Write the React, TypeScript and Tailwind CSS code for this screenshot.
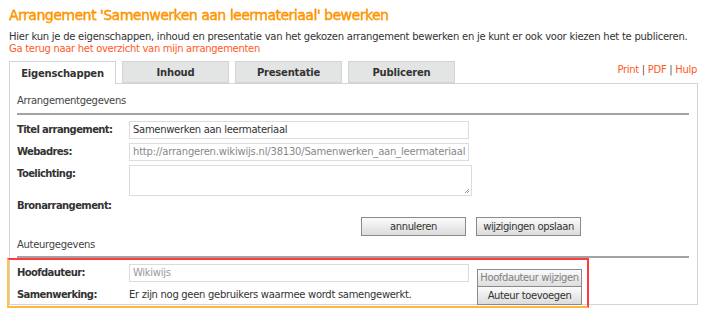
import React from 'react';

const font = { fontFamily: '"DejaVu Sans", Verdana, sans-serif' };

function Tab({ label, active }: { label: string; active?: boolean }) {
  return (
    <div
      className={
        active
          ? 'w-[107px] h-[23px] -mb-px flex items-center justify-center border border-b-0 border-[#d4d4d4] bg-white font-bold text-[10px] tracking-[-0.2px] text-[#333] z-10'
          : 'w-[107px] h-[22px] flex items-center justify-center border border-[#d4d4d4] bg-[#e3e5e5] font-bold text-[10px] tracking-[-0.2px] text-[#333]'
      }
    >
      {label}
    </div>
  );
}

function Btn({ label, disabled }: { label: string; disabled?: boolean }) {
  return (
    <button
      className={
        'w-[105px] h-[19px] border border-[#8a8a8a] bg-gradient-to-b from-[#fbfbfb] to-[#dcdcdc] text-[10px] leading-none whitespace-nowrap tracking-[-0.4px] ' +
        (disabled ? 'text-[#808080]' : 'text-[#333]')
      }
    >
      {label}
    </button>
  );
}

function Row({ label, children, h = 'h-[22px]' }: { label: string; children?: React.ReactNode; h?: string }) {
  return (
    <div className={'flex items-start ' + h}>
      <div className="w-[112px] pt-[3px] font-bold text-[10px] leading-[12px] tracking-[-0.6px] whitespace-nowrap text-[#333]">{label}</div>
      {children}
    </div>
  );
}

export default function App() {
  return (
    <div className="w-[704px] h-[314px] bg-white text-[#333] overflow-hidden" style={font}>
      <div className="pl-[9px] pr-[7px]">
        <h1 className="pt-[6px] h-[26px] text-[14px] font-normal leading-[18px] tracking-[-0.5px] bg-gradient-to-b from-[#ff7a00] to-[#ffad00] bg-clip-text text-transparent w-fit [-webkit-text-stroke:0.3px_#ff8c00]">
          Arrangement 'Samenwerken aan leermateriaal' bewerken
        </h1>
        <p className="text-[10px] leading-[12px] mt-[5px] whitespace-nowrap tracking-[-0.25px]">
          Hier kun je de eigenschappen, inhoud en presentatie van het gekozen arrangement bewerken en je kunt er ook voor kiezen het te publiceren.
        </p>
        <a className="block text-[10px] leading-[12px] tracking-[-0.3px] text-[#ff5a1e]">Ga terug naar het overzicht van mijn arrangementen</a>

        <div className="flex items-end mt-[6px]">
          <div className="flex items-end gap-[6px]">
            <Tab label="Eigenschappen" active />
            <Tab label="Inhoud" />
            <Tab label="Presentatie" />
            <Tab label="Publiceren" />
          </div>
          <div className="ml-auto mb-[6px] text-[10px] tracking-[-0.3px] text-[#ff5a1e]">
            Print <span className="text-[#555]">|</span> PDF <span className="text-[#555]">|</span> Hulp
          </div>
        </div>

        <div className="border border-[#d4d4d4] w-[689px] h-[222px] px-[7px]">
          <div className="pt-[9px] text-[10px] leading-[16px] tracking-[-0.3px] text-[#444]">Arrangementgegevens</div>
          <div className="mt-[4px] border-t-2 border-[#a3a3a3] mr-[1px]"></div>

          <div className="mt-[6px]">
            <Row label="Titel arrangement:">
              <div className="w-[340px] h-[18px] border border-[#dcdcdc] px-[3px] text-[10px] leading-[16px] tracking-[-0.3px] text-[#333]">
                Samenwerken aan leermateriaal
              </div>
            </Row>
            <Row label="Webadres:">
              <div className="w-[340px] h-[18px] border border-[#dcdcdc] px-[3px] text-[10px] leading-[16px] tracking-[-0.2px] text-[#888] whitespace-nowrap overflow-hidden">
                http://arrangeren.wikiwijs.nl/38130/Samenwerken_aan_leermateriaal
              </div>
            </Row>
            <Row label="Toelichting:" h="h-[32px]">
              <div className="relative w-[343px] h-[31px] border border-[#dcdcdc]">
                <svg className="absolute right-[1px] bottom-[1px]" width="6" height="6" viewBox="0 0 6 6">
                  <path d="M5 1L1 5M5 3L3 5" stroke="#999" strokeWidth="1" />
                </svg>
              </div>
            </Row>
            <Row label="Bronarrangement:" h="h-[20px]" />
          </div>

          <div className="flex gap-[10px] ml-[344px]">
            <Btn label="annuleren" />
            <Btn label="wijzigingen opslaan" />
          </div>

          <div className="pt-[1px] text-[10px] leading-[16px] tracking-[-0.3px] text-[#444]">Auteurgegevens</div>
          <div className="mt-[3px] border-t-2 border-[#a3a3a3] mr-[1px]"></div>

          <div className="relative pt-[6px]">
            <div className="absolute -left-[10px] top-0 w-[582px] h-[50px] border-2 border-t-[#ff3b3b] border-r-[#ff3b3b] border-b-[#ffb63a] border-l-[#ffc24a] pointer-events-none"></div>
            <div className="flex items-start h-[22px]">
              <div className="w-[112px] pt-[3px] font-bold text-[10px] leading-[12px] tracking-[-0.6px]">Hoofdauteur:</div>
              <div className="w-[340px] h-[18px] border border-[#dcdcdc] px-[3px] text-[10px] leading-[16px] tracking-[-0.3px] text-[#999]">
                Wikiwijs
              </div>
              <div className="ml-[8px]">
                <Btn label="Hoofdauteur wijzigen" disabled />
              </div>
            </div>
            <div className="flex items-start h-[20px]">
              <div className="w-[112px] pt-[3px] font-bold text-[10px] leading-[12px] tracking-[-0.6px]">Samenwerking:</div>
              <div className="w-[348px] pt-[3px] text-[10px] leading-[12px] tracking-[-0.3px] whitespace-nowrap">
                Er zijn nog geen gebruikers waarmee wordt samengewerkt.
              </div>
              <Btn label="Auteur toevoegen" />
            </div>
          </div>
        </div>
      </div>
    </div>
  );
}
